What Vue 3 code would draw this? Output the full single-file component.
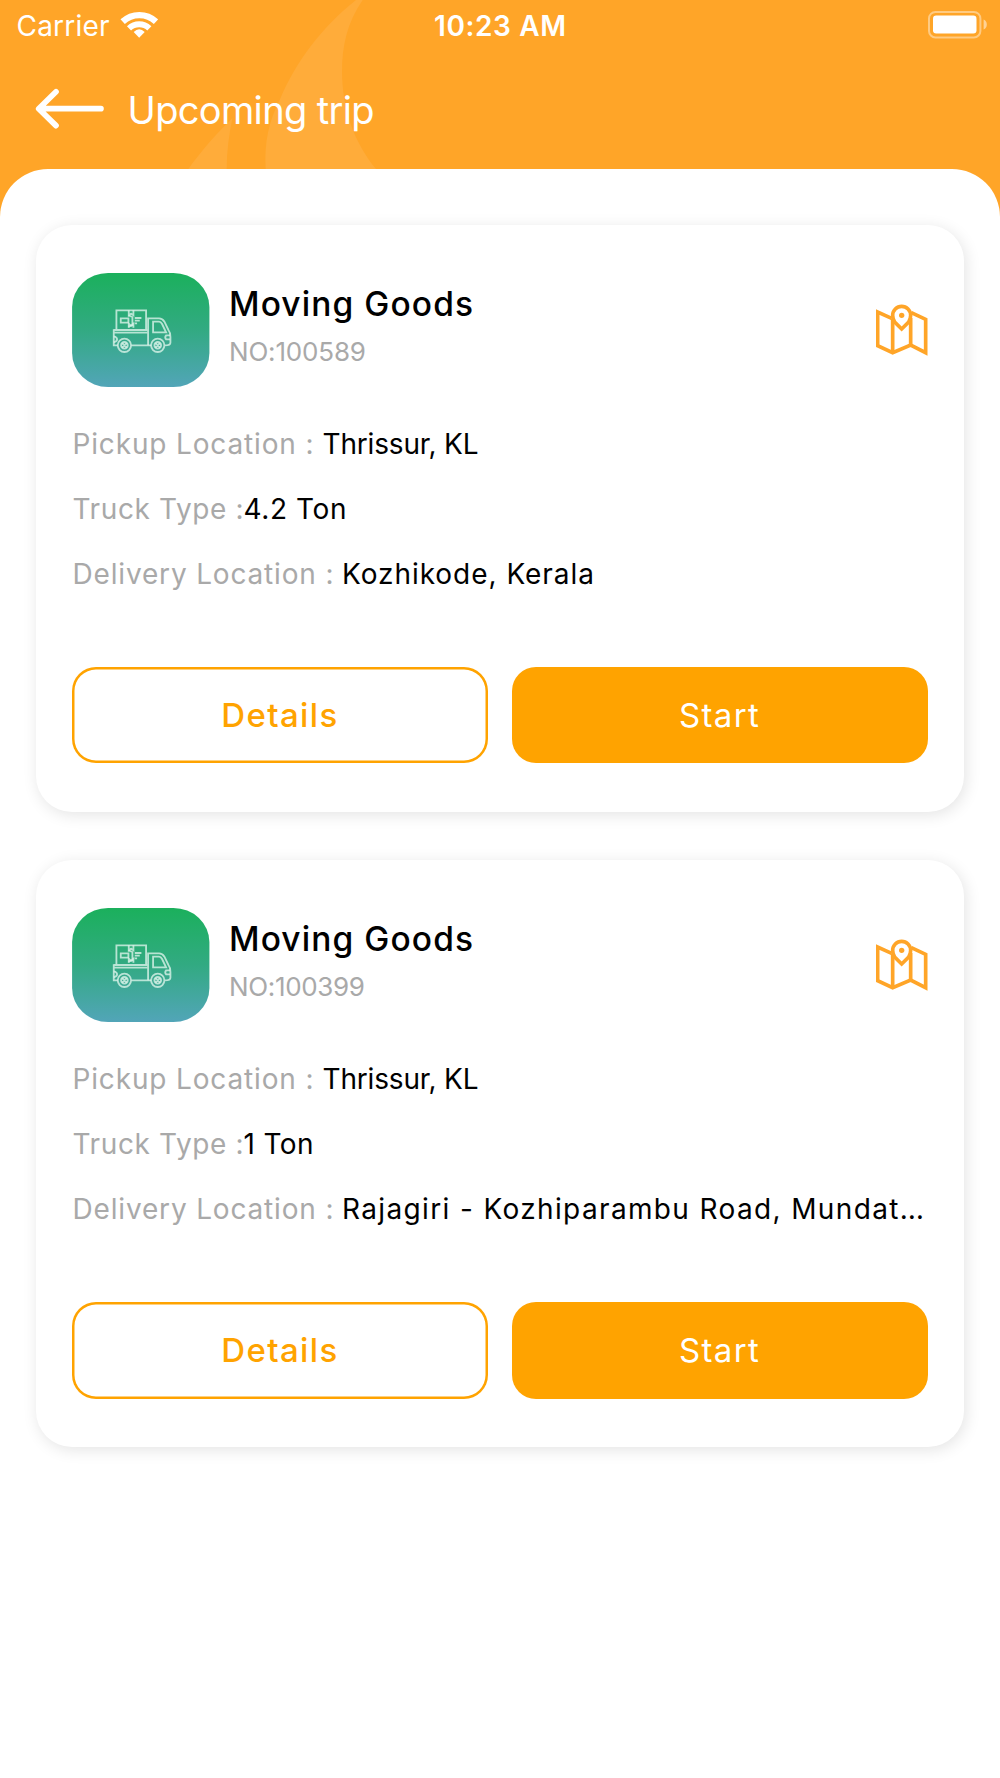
<script setup>
const trips = [
  {
    id: 'NO:100589',
    idWidth: 137,
    rows: [
      { label: 'Pickup Location :', labelWidth: 241, value: 'Thrissur, KL', valueWidth: 156, gap: 9 },
      { label: 'Truck Type :', labelWidth: 171, value: '4.2 Ton', valueWidth: 103, gap: 0 },
      { label: 'Delivery Location :', labelWidth: 261, value: 'Kozhikode, Kerala', valueWidth: 252, gap: 8.5 },
    ],
  },
  {
    id: 'NO:100399',
    idWidth: 136,
    rows: [
      { label: 'Pickup Location :', labelWidth: 241, value: 'Thrissur, KL', valueWidth: 156, gap: 9 },
      { label: 'Truck Type :', labelWidth: 171, value: '1 Ton', valueWidth: 70, gap: 0 },
      { label: 'Delivery Location :', labelWidth: 261, value: 'Rajagiri - Kozhiparambu Road, Mundat…', valueWidth: 582, gap: 8.5 },
    ],
  },
]

// Tracks the text out (or in) until it fills the given width.
const vFit = {
  mounted(el, { value }) {
    const natural = el.getBoundingClientRect().width
    const spacing = (value - natural) / (el.textContent.length - 1)
    el.style.letterSpacing = `${spacing}px`
    el.style.marginRight = `${-spacing}px`
  },
}
</script>

<template>
  <div class="screen">
    <header class="header">
      <svg class="flames" viewBox="0 0 1200 507" aria-hidden="true">
        <path d="M1088 0C1040 70 1026 140 1026 215C1027 330 1062 425 1128 507H797C793 425 806 365 840 298C888 185 965 82 1068 0Z" />
        <path d="M697 355C650 400 605 452 565 507H680C680 455 687 405 697 355Z" />
      </svg>
      <div class="status">
        <div class="carrier">
          <span v-fit="93">Carrier</span>
          <svg class="wifi" viewBox="358 28 116 86" aria-hidden="true">
            <path d="M366 63A73 73 0 0 1 466 63" fill="none" stroke="#fff" stroke-width="19" />
            <path d="M385 83A45 45 0 0 1 446 83" fill="none" stroke="#fff" stroke-width="18" />
            <path d="M399 94Q415.500 78 432 94L415.500 111Z" fill="#fff" />
          </svg>
        </div>
        <div class="time"><span v-fit="132">10:23 AM</span></div>
        <div class="power">
          <svg class="battery" viewBox="0 0 60 28" aria-hidden="true">
            <rect x="1" y="1" width="51.400" height="25.400" rx="6.500" fill="none" stroke="#fff" stroke-opacity=".42" stroke-width="2" />
            <rect x="5" y="4.500" width="43.500" height="18" rx="3.200" fill="#fff" />
            <path d="M55.600 8.600Q58.800 10 58.800 13.600T55.600 18.600Z" fill="#fff" fill-opacity=".5" />
          </svg>
        </div>
      </div>
      <div class="titlebar">
        <svg class="back" viewBox="105 264 210 124" aria-hidden="true">
          <path d="M168 275L116 326L168 377M118 326H303" />
        </svg>
        <h1><span v-fit="247">Upcoming trip</span></h1>
      </div>
    </header>

    <main class="sheet">
      <article v-for="trip in trips" :key="trip.id" class="card">
        <div class="top">
          <svg class="badge" viewBox="38 38 412 342" aria-hidden="true">
            <defs>
              <linearGradient id="badge-fill" x1="0" y1="0" x2="0" y2="1">
                <stop offset="0" stop-color="#1bb05c" />
                <stop offset=".5" stop-color="#32aa82" />
                <stop offset="1" stop-color="#52a5b8" />
              </linearGradient>
            </defs>
            <rect x="38" y="38" width="412" height="342" rx="108" ry="102" fill="url(#badge-fill)" />
            <g class="truck">
              <path d="M171 207V150H260V207" />
              <path d="M163 207V255H175M163 209H264M163 217H264M216 255H275" />
              <path d="M208 150V165L215 160L222 165V150M208 202V190L215 196L222 190V202" />
              <path d="M184 174H207V187H184ZM207 165L219 170V195L207 199M226 173H246M226 181H241M226 189H233" />
              <path d="M266 255V174H299Q309 174 315 184L327 209Q333 216 333 230V247Q333 255 317 255" />
              <path d="M281 184H299Q304 184 308 191L320 216H281ZM332 225H320Q315 231 320 237H332M163 228Q173 230 173 237T163 246" />
              <circle cx="195" cy="255" r="20" />
              <circle cx="195" cy="255" r="10" />
              <circle cx="295" cy="255" r="20" />
              <circle cx="295" cy="255" r="10" />
              <path d="M188 248L202 262M202 248L188 262M288 248L302 262M302 248L288 262" />
            </g>
          </svg>
          <div class="names">
            <h2><span v-fit="244">Moving Goods</span></h2>
            <p><span v-fit="trip.idWidth">{{ trip.id }}</span></p>
          </div>
          <svg class="map" viewBox="78 70 156 156" aria-hidden="true">
            <path d="M125 113L83 94V195L128 216L182 193L227 216V116L184 96" />
            <path d="M128 114V217M182 112V194" />
            <path d="M155 145L134 124Q128 115 128 104A27 27 0 0 1 182 104Q182 115 176 124Z" />
            <circle cx="155" cy="104" r="8" />
          </svg>
        </div>
        <div class="rows">
          <div v-for="row in trip.rows" :key="row.label" class="row">
            <span v-fit="row.labelWidth" class="label">{{ row.label }}</span>
            <span class="value" :style="{ paddingLeft: `${row.gap}px` }"><span v-fit="row.valueWidth">{{ row.value }}</span></span>
          </div>
        </div>
        <div class="actions">
          <button class="btn outline"><span v-fit="116">Details</span></button>
          <button class="btn solid"><span v-fit="80">Start</span></button>
        </div>
      </article>
    </main>
  </div>
</template>

<style>
body {
  margin: 0;
}
</style>

<style scoped>
.screen {
  width: 1000px;
  height: 1778px;
  overflow: hidden;
  background: #ffa528;
  font-family: Inter, "Liberation Sans", sans-serif;
  display: flex;
  flex-direction: column;
}
.screen span {
  display: inline-block;
  white-space: nowrap;
  flex: none;
}
.header {
  position: relative;
  height: 169px;
  flex: none;
  color: #fff;
}
.flames {
  position: absolute;
  left: 0;
  top: 0;
  width: 400px;
  height: 169px;
  fill: #ffac3a;
}
.status {
  position: relative;
  display: grid;
  grid-template-columns: 1fr auto 1fr;
  height: 51px;
  align-items: center;
  font-size: 28px;
  line-height: 50px;
}
.carrier {
  display: flex;
  align-items: center;
  padding-left: 16.500px;
}
.wifi {
  width: 38.700px;
  height: 28.700px;
  margin: -3px 0 0 10px;
}
.time {
  font-weight: 600;
}
.power {
  display: flex;
  justify-content: flex-end;
}
.battery {
  width: 60px;
  height: 28px;
  margin: -2px 12px 0 0;
}
.titlebar {
  position: relative;
  display: flex;
  align-items: center;
  height: 116px;
  padding-left: 35px;
}
.back {
  width: 70px;
  height: 41.300px;
  fill: none;
  stroke: #fff;
  stroke-width: 17;
  stroke-linecap: round;
  stroke-linejoin: round;
}
h1 {
  margin: 1px 0 0 22.500px;
  font-size: 38px;
  line-height: 46px;
  font-weight: 400;
}
.sheet {
  flex: 1;
  display: flex;
  flex-direction: column;
  gap: 48px;
  padding: 55.700px 36px 0 36.200px;
  border-radius: 48px 48px 0 0;
  background: #fff;
}
.card {
  box-sizing: border-box;
  height: 587.200px;
  padding: 48px 36.300px;
  border-radius: 36px;
  background: #fff;
  box-shadow: 2px 3px 16px rgba(0, 0, 0, 0.11);
}
.top {
  display: flex;
  height: 114px;
}
.badge {
  width: 137.500px;
  height: 114px;
}
.truck {
  fill: none;
  stroke: #d9f2e8;
  stroke-opacity: 0.8;
  stroke-width: 5.500;
}
.names {
  margin-left: 19px;
  flex: 1;
}
h2 {
  margin: 11px 0 0;
  font-size: 33.500px;
  line-height: 40px;
  font-weight: 500;
  color: #000;
}
.names p {
  margin: 11px 0 0;
  font-size: 26px;
  line-height: 34px;
  color: #a9a9a9;
}
.map {
  width: 52px;
  height: 52px;
  margin-top: 31px;
  fill: none;
  stroke: #ffa528;
  stroke-width: 11;
}
.map circle {
  fill: #ffa528;
  stroke: none;
}
.rows {
  padding-top: 25px;
}
.row {
  display: flex;
  height: 65.200px;
  line-height: 65.200px;
  font-size: 28px;
}
.label {
  color: #a9a9a9;
}
.value {
  color: #000;
}
.actions {
  display: flex;
  gap: 24px;
  margin-top: 59.400px;
}
.btn {
  flex: 1;
  height: 96.700px;
  padding: 0 2px 0 0;
  border: 0;
  border-radius: 24px;
  font-family: inherit;
  font-size: 33px;
  line-height: 40px;
}
.outline {
  background: #fff;
  box-shadow: inset 0 0 0 2.500px #ffa300;
  color: #ffa300;
  font-weight: 500;
}
.solid {
  background: #ffa300;
  color: #fff;
}
</style>
